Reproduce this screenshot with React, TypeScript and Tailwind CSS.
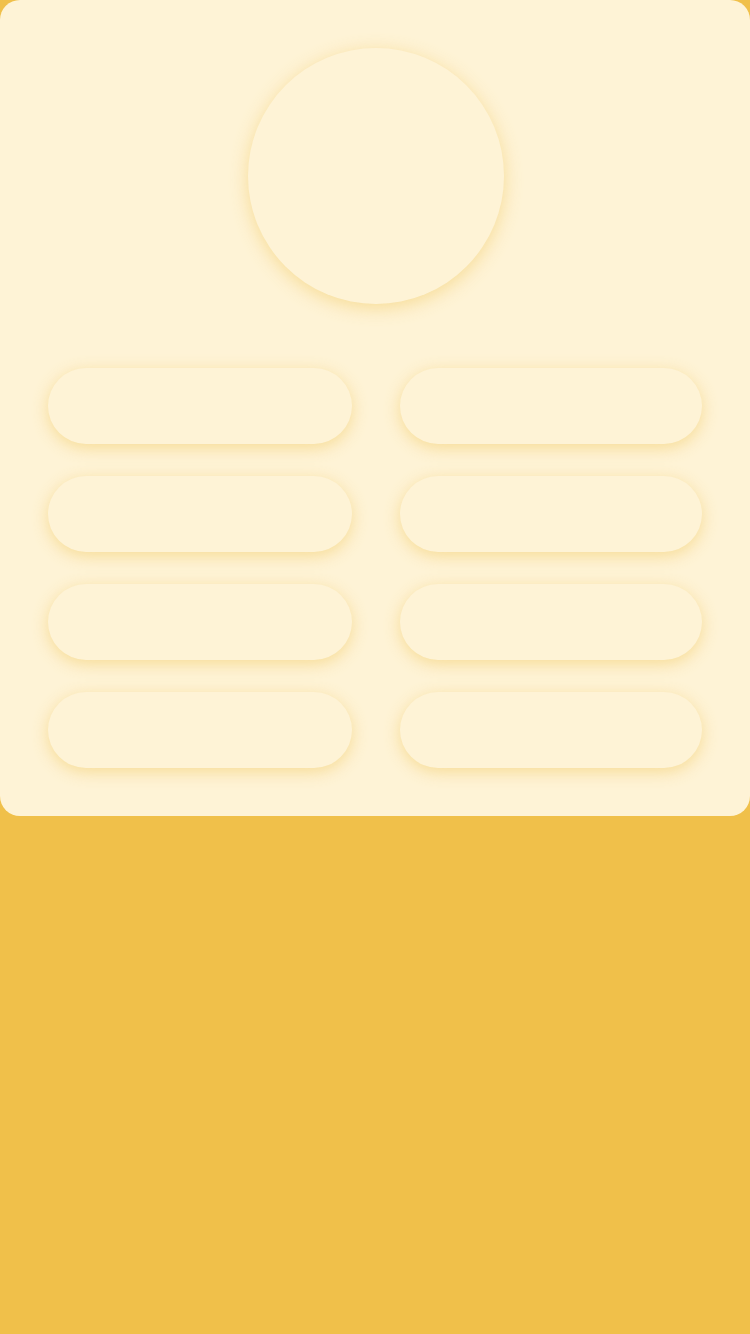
const TILE_COUNT = 8;

function App() {
    return (
        <div className="min-h-[1334px] w-full bg-[#f0c04a]">
            <section className="rounded-[20px] bg-[#fef3d6] px-12 pt-12 pb-12">
                <div className="flex justify-center pl-[2px]">
                    <div className="h-64 w-64 rounded-full bg-[#fef3d6] shadow-[0_4px_18px_rgba(240,192,74,0.45)]" />
                </div>
                <div className="mt-16 grid grid-cols-[304px_302px] gap-x-12 gap-y-8">
                    {[...Array(TILE_COUNT)].map((_, index) => (
                        <div
                            key={index}
                            className="h-[76px] rounded-full bg-[#fef3d6] shadow-[0_4px_16px_rgba(240,192,74,0.45)]"
                        />
                    ))}
                </div>
            </section>
        </div>
    );
}

export default App;
